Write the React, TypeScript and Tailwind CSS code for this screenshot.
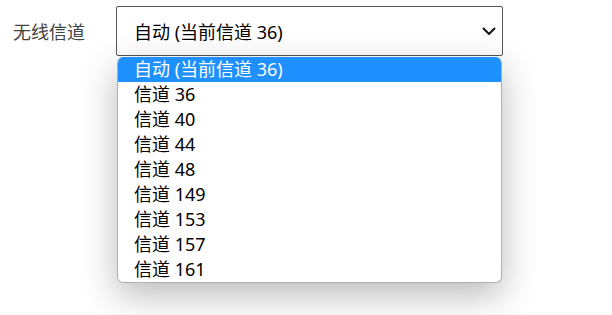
import React from "react";

const options = [
  "自动 (当前信道 36)",
  "信道 36",
  "信道 40",
  "信道 44",
  "信道 48",
  "信道 149",
  "信道 153",
  "信道 157",
  "信道 161",
];

export default function App() {
  return (
    <div
      className="w-[612px] h-[315px] bg-white overflow-hidden"
      style={{ fontFamily: '"Noto Sans", "Noto Sans CJK SC", sans-serif' }}
    >
      <div className="flex pt-[6px] pl-[13px]">
        <div className="w-[103px] h-[50px] flex items-center pt-[2px] text-[18px] text-[#444]">
          无线信道
        </div>
        <div className="relative">
          <div className="w-[387px] h-[50px] border border-[#555] rounded-[2px] flex items-center justify-between pl-[17px] pr-[6px] text-[18px] text-black">
            <span className="pt-[2px]">自动 (当前信道 36)</span>
            <svg width="14" height="8" viewBox="0 0 14 8">
              <path d="M1 1 L7 7 L13 1" fill="none" stroke="#111" strokeWidth="2" />
            </svg>
          </div>
          <div className="absolute left-[1px] top-[51px] w-[385px] rounded-[6px] bg-white overflow-hidden shadow-[0_12px_36px_rgba(0,0,0,0.28)] border border-[#b0b0b0] border-t-0">
            {options.map((o, i) => (
              <div
                key={o}
                className={
                  i === 0
                    ? "h-[25px] flex items-center pl-[16px] text-[18px] bg-[#1e90ff] text-white"
                    : "h-[25px] flex items-center pl-[16px] text-[18px] text-black"
                }
              >
                {o}
              </div>
            ))}
          </div>
        </div>
      </div>
    </div>
  );
}
